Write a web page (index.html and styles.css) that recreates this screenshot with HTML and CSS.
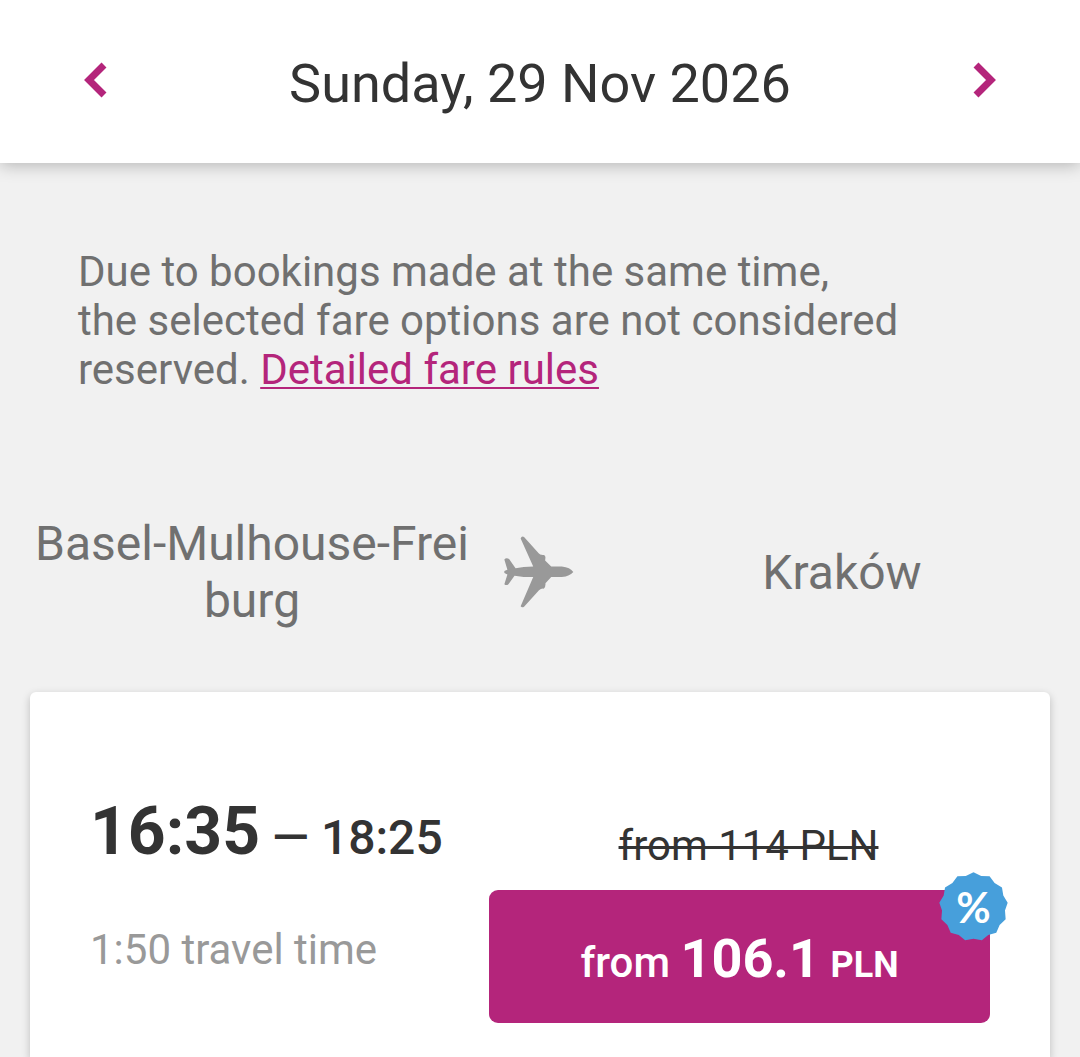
FILE: index.html
```html
<!DOCTYPE html>
<html lang="en">
<head>
    <meta charset="UTF-8">
    <title>Select flight</title>
    <meta name="viewport" content="width=device-width, initial-scale=1">
    <link rel="stylesheet" href="styles.css">
</head>
<body>
    <header class="date-bar">
        <button type="button" class="date-nav" aria-label="Previous day">
            <svg width="24" height="38" viewBox="0 0 24 38"><path d="M20 4 L5 19 L20 34"/></svg>
        </button>
        <h1>Sunday, 29 Nov 2026</h1>
        <button type="button" class="date-nav" aria-label="Next day">
            <svg width="24" height="38" viewBox="0 0 24 38"><path d="M4 4 L19 19 L4 34"/></svg>
        </button>
    </header>

    <main>
        <p class="notice">
            Due to bookings made at the same time,<br>
            the selected fare options are not considered reserved.
            <a href="#fare-rules">Detailed fare rules</a>
        </p>

        <div class="route">
            <span class="city">Basel-Mulhouse-Freiburg</span>
            <svg class="plane" viewBox="45 50 206 210" aria-hidden="true">
                <path d="M94 57 Q97 49 104 53 L147 101 Q151 107 162 106 Q167 107 167 113 L166 122 L184 140 L215 140 Q240 143 249 156 Q240 168 215 171 L184 171 L167 189 Q168 200 162 205 Q154 204 148 210 L104 258 Q98 262 94 257 L131 171 L103 171 L76 167 L58 192 Q52 197 46 192 L55 163 Q45 160 45 156 Q45 152 55 149 L46 119 Q52 112 60 118 L79 145 L103 141 L131 140 Z"/>
            </svg>
            <span class="city">Kraków</span>
        </div>

        <section class="flight-card">
            <div class="flight-info">
                <p class="times"><strong>16:35</strong> <span>— 18:25</span></p>
                <p class="duration">1:50 travel time</p>
            </div>
            <div class="fare">
                <s class="old-price">from 114 PLN</s>
                <button type="button" class="price-button">
                    from <strong>106.1</strong> <small>PLN</small>
                    <span class="badge">
                        <svg viewBox="57 34 206 206" aria-hidden="true">
                            <polygon points="160,35 183,46 208,47 223,67 245,80 249,104 262,126 254,149 256,175 238,192 228,215 204,222 185,238 160,233 135,238 116,222 92,215 82,192 64,175 66,149 58,126 71,104 75,80 97,67 112,47 137,46"/>
                        </svg>
                        <span class="badge-text">%</span>
                    </span>
                </button>
            </div>
        </section>
    </main>
</body>
</html>
```

FILE: styles.css
```css
* {
    box-sizing: border-box;
}

body {
    margin: 0;
    background: #f1f1f1;
    color: #333;
    font-family: Roboto, sans-serif;
    font-size: 42px;
    line-height: 49px;
}

h1,
p {
    margin: 0;
}

button {
    border: none;
    font-family: inherit;
    cursor: pointer;
}

.date-bar {
    display: flex;
    align-items: center;
    justify-content: space-between;
    padding: 52px 72px 47px;
    background: #fff;
    box-shadow: 0 2px 16px rgba(0,0,0,0.26);
}

.date-bar h1 {
    font-size: 54px;
    font-weight: 400;
    line-height: 64px;
}

.date-nav {
    display: flex;
    padding: 0 12px 8px;
    background: none;
}

.date-nav path {
    fill: none;
    stroke: #b4257b;
    stroke-width: 7;
}

.notice {
    padding: 84px 78px 0;
    color: #707070;
}

.notice a {
    color: #b4257b;
    text-decoration-thickness: 2px;
    text-underline-offset: 3px;
}

.route {
    display: grid;
    grid-template-columns: 444fr 70px 446fr;
    align-items: center;
    gap: 30px;
    margin-top: 121px;
    padding: 0 30px;
}

.city {
    color: #707070;
    font-size: 48px;
    line-height: 57px;
    text-align: center;
    word-break: break-all;
}

.city:last-child {
    padding-left: 30px;
}

.plane {
    width: 70px;
    fill: #999;
}

.flight-card {
    display: flex;
    justify-content: space-between;
    margin: 63px 30px 0;
    padding: 100px 60px 35px;
    background: #fff;
    border-radius: 6px 6px 0 0;
    box-shadow: 0 3px 8px rgba(0,0,0,0.22);
}

.times {
    font-size: 48px;
    line-height: 80px;
}

.times strong {
    font-size: 66px;
}

.times span {
    font-weight: 500;
}

.duration {
    margin-top: 47px;
    color: #999;
}

.fare {
    display: flex;
    flex-direction: column;
    width: 501px;
    padding-top: 29px;
}

.old-price {
    padding-left: 18px;
    text-align: center;
    text-decoration-thickness: 3px;
}

.price-button {
    position: relative;
    margin-top: 20px;
    padding: 40px 0 29px;
    background: #b4257b;
    border-radius: 9px;
    color: #fff;
    font-size: 42px;
    font-weight: 500;
    line-height: 58px;
}

.price-button strong {
    font-size: 54px;
}

.price-button small {
    font-size: 36px;
    font-weight: 700;
}

.badge {
    position: absolute;
    top: -18px;
    right: -18px;
    display: grid;
    place-items: center;
    width: 69px;
    height: 69px;
}

.badge svg,
.badge-text {
    grid-area: 1 / 1;
}

.badge svg {
    width: 69px;
    fill: #479fdb;
}

.badge-text {
    font-family: Lato, sans-serif;
    font-size: 42px;
    font-weight: 700;
    line-height: 1;
}
```
